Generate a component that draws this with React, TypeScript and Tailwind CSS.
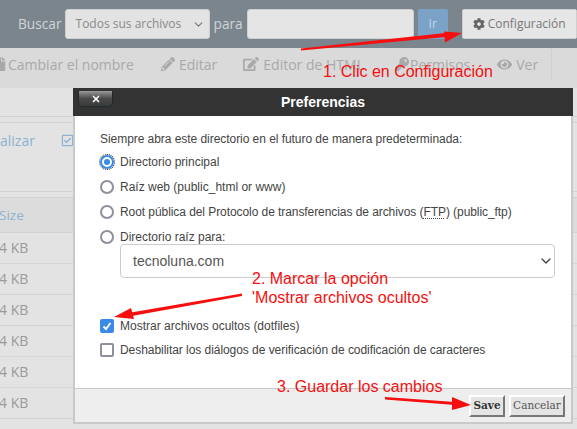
import { ChevronDown, X } from "lucide-react";
import { FaCog, FaEdit, FaEye, FaFile, FaKey, FaPencilAlt, FaRegCheckSquare } from "react-icons/fa";

const rows = [0, 1, 2, 3, 4, 5];

function Radio({ checked = false }: { checked?: boolean }) {
  if (checked) {
    return (
      <span className="flex h-[14px] w-[14px] shrink-0 items-center justify-center rounded-full border-2 border-[#3a8ae8] bg-white outline-1 outline-dotted outline-[#222]">
        <span className="h-[6px] w-[6px] rounded-full bg-[#3a8ae8]" />
      </span>
    );
  }
  return <span className="h-[14px] w-[14px] shrink-0 rounded-full border-2 border-[#8f8f9d] bg-white" />;
}

function Arrows() {
  return (
    <svg className="pointer-events-none absolute left-0 top-0" width="577" height="429" viewBox="0 0 577 429">
      <path d="M301 50.500 L446 37 L445.500 33 L301 48.500 Z" fill="#f50f0f" />
      <path d="M462 33 L444 31.500 L445 42.500 Z" fill="#f50f0f" />
      <path d="M242 293.500 L128 313 L129 316.500 L242 296 Z" fill="#f50f0f" />
      <path d="M114 317 L131 308 L134 319 Z" fill="#f50f0f" />
      <path d="M385 397 L455 402 L455 405 L385 399.500 Z" fill="#f50f0f" />
      <path d="M471 405 L452 397 L452 410 Z" fill="#f50f0f" />
    </svg>
  );
}

export default function App() {
  return (
    <div className="relative h-[429px] w-[577px] overflow-hidden bg-[#e3e3e3] font-['Open_Sans',sans-serif]">
      <div className="flex h-[48px] items-center bg-[#7b858d] pl-[18px] text-[13.7px] text-[#d2d5d8]">
        <span className="mr-[3px]">Buscar</span>
        <div className="relative h-[30px] w-[145px] rounded-[3px] border border-[#cfcfcf] bg-[#e3e3e3]">
          <span className="absolute left-[10px] top-[5px] text-[12px] leading-[18px] text-[#8a8a8a]">Todos sus archivos</span>
          <ChevronDown className="absolute right-[4px] top-[8px] text-[#777]" size={13} />
        </div>
        <span className="ml-[4px]">para</span>
        <div className="ml-[4px] h-[30px] w-[167px] rounded-[3px] border border-[#cfcfcf] bg-[#e5e5e5]" />
        <div className="ml-[4px] flex h-[30px] w-[30px] items-center justify-center rounded-[2px] bg-[#7ba3c8] text-[12px] text-[#c5d6e6]">Ir</div>
        <div className="ml-[14px] flex h-[30px] w-[115px] items-center justify-center gap-[3px] rounded-[2px] border border-[#cfcfcf] bg-[#e6e6e6] text-[12px] text-[#777]">
          <FaCog size={12} className="text-[#666]" />
          Configuración
        </div>
      </div>

      <div className="flex h-[40px] items-center whitespace-nowrap bg-[#dadada] pb-[8px] text-[14px] text-[#a9a9a9]">
        <FaFile size={14} className="ml-[-7px] shrink-0" />
        <span className="ml-[1px]">Cambiar el nombre</span>
        <FaPencilAlt size={14} className="ml-[27px] shrink-0" />
        <span className="ml-[4px]">Editar</span>
        <FaEdit size={16} className="ml-[26px] shrink-0" />
        <span className="ml-[4px]">Editor de HTML</span>
        <FaKey size={14} className="ml-[31px] shrink-0" />
        <span className="ml-[1px]">Permisos</span>
        <FaEye size={15} className="ml-[27px] shrink-0" />
        <span className="ml-[4px]">Ver</span>
        <span className="ml-[13px] h-[32px] self-start border-l border-dotted border-[#c8c8c8]" />
      </div>

      <div className="overflow-hidden whitespace-nowrap">
        <div className="h-[28px]" />
        <div className="h-[7px] border-y border-[#d2d2d2]" />
        <div className="relative h-[68px] text-[14px] text-[#8db2d2]">
          <span className="absolute left-0 top-[7px]">alizar</span>
          <FaRegCheckSquare size={13} className="absolute left-[61px] top-[11px]" />
        </div>
        <div className="h-[7px] border-y border-[#d2d2d2]" />
        <div className="flex h-[35px] items-center border-b border-[#d2d2d2] bg-[#dcdcdc] text-[13.5px] text-[#8db2d2]">
          <span className="-ml-[1px]">Size</span>
        </div>
        {rows.map((r) => (
          <div key={r} className="flex h-[31px] items-center border-b border-[#d4d4d4] pb-[1px] text-[14px] text-[#9a9a9a]">
            <span className="-ml-[1px]">4 KB</span>
          </div>
        ))}
      </div>

      <div className="absolute left-[73px] top-[88px] flex h-[336px] w-[500px] flex-col border-x-[2px] border-b-[2px] border-[#c9c9c9] font-['Liberation_Sans',sans-serif]">
        <div className="relative -mx-[2px] flex h-[28px] shrink-0 items-center justify-center bg-[#333] text-[14px] font-bold text-white">
          Preferencias
          <button className="absolute left-[5px] top-[3px] flex h-[16px] w-[35px] items-center justify-center rounded-b-[5px] border-x border-b border-[#1f2a30] bg-gradient-to-b from-[#999] via-[#4a4a4a] to-[#3b3b3b]">
            <X size={10} strokeWidth={4} className="text-white" />
          </button>
        </div>
        <div className="flex-1 bg-white pl-[25px] pr-[16px] pt-[16px] text-[12px] leading-[18px] text-[#444]">
          <p className="leading-[14px] tracking-[-0.05px]">Siempre abra este directorio en el futuro de manera predeterminada:</p>
          <div className="mt-[7px] flex flex-col gap-[7px]">
            <div className="flex items-center gap-[6px]"><Radio checked />Directorio principal</div>
            <div className="flex items-center gap-[6px]"><Radio />Raíz web (public_html or www)</div>
            <div className="flex items-center gap-[6px]">
              <Radio />
              <span className="tracking-[-0.07px]">
                Root pública del Protocolo de transferencias de archivos (
                <abbr className="underline decoration-dotted underline-offset-2">FTP</abbr>) (public_ftp)
              </span>
            </div>
            <div className="flex items-center gap-[6px]"><Radio />Directorio raíz para:</div>
          </div>
          <div className="relative mb-[39px] ml-[20px] mt-[-2px] flex h-[34px] w-[435px] items-center rounded-[4px] border border-[#ccc] pl-[12px] text-[14px] text-[#555]">
            tecnoluna.com
            <ChevronDown size={16} strokeWidth={2} className="absolute right-0 top-[8px] text-[#444]" />
          </div>
          <div className="flex flex-col gap-[6px]">
            <div className="flex items-center gap-[6px]">
              <span className="flex h-[14px] w-[14px] shrink-0 items-center justify-center rounded-[2px] bg-[#3a8ae8]">
                <svg width="10" height="10" viewBox="0 0 10 10">
                  <path d="M1.500 5.500 L4 8 L8.500 2" fill="none" stroke="white" strokeWidth="2" />
                </svg>
              </span>
              Mostrar archivos ocultos (dotfiles)
            </div>
            <div className="flex items-center gap-[6px]">
              <span className="h-[14px] w-[14px] shrink-0 rounded-[2px] border-2 border-[#8f8f9d]" />
              <span className="tracking-[-0.05px]">Deshabilitar los diálogos de verificación de codificación de caracteres</span>
            </div>
          </div>
        </div>
        <div className="flex h-[34px] shrink-0 items-center justify-end gap-[4px] border-t border-[#c9c9c9] bg-[#eeeeee] pr-[6px] font-['DejaVu_Serif',serif] text-[10.5px]">
          <button className="h-[22px] w-[36px] border-2 border-b-[#777] border-l-white border-r-[#777] border-t-white bg-[#e4e4e4] font-bold text-[#333]">Save</button>
          <button className="h-[22px] w-[56px] border-2 border-b-[#777] border-l-white border-r-[#777] border-t-white bg-[#e4e4e4] text-[#555]">Cancelar</button>
        </div>
      </div>

      <Arrows />

      <div className="absolute left-[323px] top-[63px] font-['Liberation_Sans',sans-serif] text-[16px] leading-[18px] text-[#f50f0f]">1. Clic en Configuración</div>
      <div className="absolute left-[252px] top-[269px] font-['Liberation_Sans',sans-serif] text-[16px] leading-[19px] text-[#f50f0f]">
        2. Marcar la opción
        <br />
        'Mostrar archivos ocultos'
      </div>
      <div className="absolute left-[277px] top-[378px] font-['Liberation_Sans',sans-serif] text-[16px] leading-[18px] text-[#f50f0f]">3. Guardar los cambios</div>
    </div>
  );
}
